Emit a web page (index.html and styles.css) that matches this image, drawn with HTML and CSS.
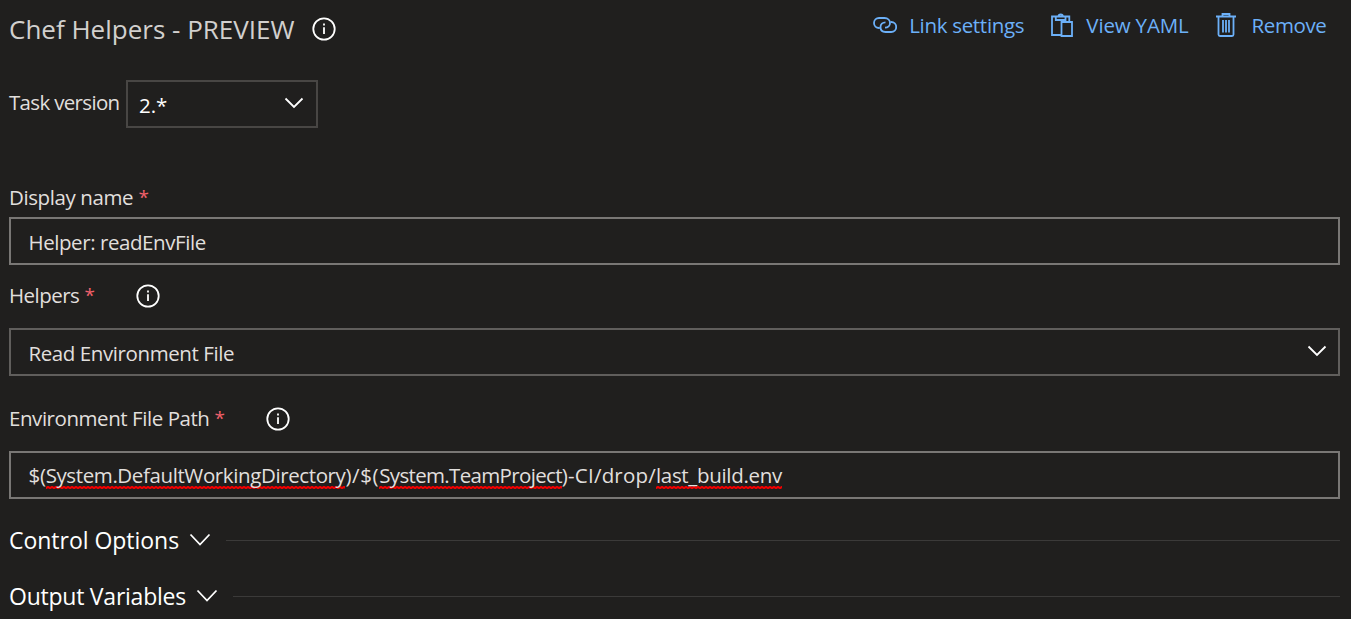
FILE: index.html
```html
<!DOCTYPE html>
<html lang="en">
<head>
<meta charset="utf-8">
<title>Chef Helpers</title>
<link rel="stylesheet" href="styles.css">
</head>
<body>
<main class="panel">
<header class="header">
<h1 class="title"><span>Chef Helpers - PREVIEW</span>
<svg class="info" viewBox="0 0 24 24"><circle cx="12" cy="12" r="10.7"/><path d="M12 10.2V17M12 6.6V8.6"/></svg></h1>
<nav class="actions">
<a class="action"><svg class="icon-link" viewBox="0 0 24 16"><path d="M6.8 11H6A5 5 0 0 1 6 1H11.5C15 1 17 3.5 17 6S15 10.7 12 10.7"/><path d="M17.5 5H18.2A5 5 0 0 1 18.2 15H12.5C9 15 7.5 12.5 7.5 10S9.5 5.3 12.5 5.3"/></svg><span class="t-link">Link settings</span></a>
<a class="action"><svg class="icon-paste" viewBox="0 0 22 24"><path d="M10.5 22H1V3.5H18.3V9M4.8 3.5V7H14.5V3.5M7.5 3.5A2.2 2.2 0 0 1 11.9 3.5M10.5 9H21V23H10.5Z"/></svg><span class="t-yaml">View YAML</span></a>
<a class="action"><svg class="icon-trash" viewBox="0 0 20 24"><path d="M0 3.5H20M6.5 3.5V1H13.5V3.5M2.5 3.5V21.5Q2.5 23 4 23H16Q17.5 23 17.5 21.5V3.5M7 7V19.5M10 7V19.5M13 7V19.5"/></svg><span class="t-remove">Remove</span></a>
</nav>
</header>
<section class="version"><label class="version-label">Task version</label><div class="version-select"><span>2.*</span><svg class="chevron" viewBox="0 0 20 12"><path d="M1.5 1.5 10 10 18.5 1.5"/></svg></div></section>
<div class="label label-name"><span class="t-name">Display name</span><span class="star">*</span></div>
<div class="field"><span class="t-value">Helper: readEnvFile</span></div>
<div class="label label-helpers"><span class="t-helpers">Helpers</span><span class="star">*</span><svg class="info" viewBox="0 0 24 24"><circle cx="12" cy="12" r="10.7"/><path d="M12 10.2V17M12 6.6V8.6"/></svg></div>
<div class="field dropdown"><span class="t-read">Read Environment File</span><svg class="chevron" viewBox="0 0 20 12"><path d="M1.5 1.5 10 10 18.5 1.5"/></svg></div>
<div class="label label-path"><span class="t-env">Environment File Path</span><span class="star">*</span><svg class="info" viewBox="0 0 24 24"><circle cx="12" cy="12" r="10.7"/><path d="M12 10.2V17M12 6.6V8.6"/></svg></div>
<div class="field path"><span class="t-path">$(<span class="spell directory">System.DefaultWorkingDirectory</span><span class="joint">)/$(</span><span class="spell project">System.TeamProject</span><span class="folder">)-CI/drop/</span><span class="spell">last_build.env</span></span></div>
<section class="groups">
<div class="group"><span class="t-control">Control Options</span><svg class="chevron" viewBox="0 0 22 14"><path d="M1.5 1.5 11 11.5 20.5 1.5"/></svg><hr class="rule"></div>
<div class="group"><span class="t-output">Output Variables</span><svg class="chevron" viewBox="0 0 22 14"><path d="M1.5 1.5 11 11.5 20.5 1.5"/></svg><hr class="rule"></div>
</section>
</main>
</body>
</html>
```
FILE: styles.css
```css
* { box-sizing: border-box; }
body { margin: 0; background: #201f1e; color: #e1dfdd; font: 20.5px/28px "Open Sans", "Noto Sans", sans-serif; }
svg { display: block; flex: none; fill: none; stroke: currentColor; stroke-width: 1.8; }
.panel { width: 1351px; height: 619px; overflow: hidden; padding: 0 11px 0 9px; white-space: nowrap; }
.header { height: 80px; display: flex; justify-content: space-between; }
.title { margin: 0; padding-top: 11px; font-size: 26px; line-height: 36px; font-weight: 400; color: #d2d0ce; display: flex; gap: 17px; }
.info { width: 24px; height: 24px; color: #fff; }
.title .info { margin-top: 6px; }
.actions { display: flex; padding: 11px 13.5px 0 0; height: 40px; color: #6cb0f8; }
.action { display: flex; }
.icon-link { width: 24px; height: 16px; margin: 6px 12.5px 0 0; }
.icon-paste { width: 22px; height: 24px; margin: 2px 13px 0 27px; }
.icon-trash { width: 20px; height: 24px; margin: 2px 15px 0 28px; }
.t-link { letter-spacing: -.3px; }
.t-yaml { letter-spacing: -.17px; }
.t-remove { letter-spacing: -.37px; }
.version { display: flex; height: 48px; }
.version-label { width: 117px; padding-top: 8px; letter-spacing: -.67px; }
.version-select { width: 192px; border: 2px solid #484644; display: flex; align-items: center; justify-content: space-between; padding: 2px 12px 0 11px; color: #fff; }
.chevron { width: 20px; height: 12px; color: #fff; }
.version-select .chevron, .dropdown .chevron { margin-bottom: 4px; }
.label { display: flex; }
.label-name { height: 89px; padding-top: 55px; }
.label-helpers { height: 63px; padding-top: 16px; }
.label-path { height: 75px; padding-top: 28px; }
.label .info { margin: 3px 0 0 41px; }
.t-name { width: 125px; letter-spacing: -.4px; }
.t-helpers { width: 71px; letter-spacing: -.53px; }
.t-env { width: 201px; letter-spacing: -.44px; }
.star { color: #f1606b; margin-left: 4.5px; width: 10px; font-size: 19px; }
.field { height: 48px; border: 2px solid #797775; display: flex; align-items: center; justify-content: space-between; padding: 2px 11px 0 17.5px; }
.t-value { letter-spacing: -.43px; }
.t-read { letter-spacing: -.41px; }
.dropdown { border-color: #605e5c; }
.path { padding-top: 0; }
.t-path { letter-spacing: -.32px; }
.directory { letter-spacing: -.39px; }
.joint { letter-spacing: .6px; }
.project { letter-spacing: -.66px; }
.folder { letter-spacing: .2px; }
.spell { background: url("data:image/svg+xml,%3Csvg xmlns='http://www.w3.org/2000/svg' width='4' height='3'%3E%3Cpath d='M-1 2Q0 2.6 1 1.5T3 1.5T5 1.5' fill='none' stroke='%23f00000' stroke-width='2'/%3E%3C/svg%3E") repeat-x 0 100%; }
.groups { padding-top: 13px; font-size: 23px; color: #fff; }
.group { display: flex; align-items: center; height: 56px; }
.group .chevron { width: 22px; height: 14px; margin-left: 10px; }
.t-control { width: 170px; letter-spacing: -.03px; }
.t-output { width: 177px; letter-spacing: -.24px; }
.rule { flex: 1; height: 1px; border: 0; background: #3b3a39; margin: 0 0 0 15px; }
```
